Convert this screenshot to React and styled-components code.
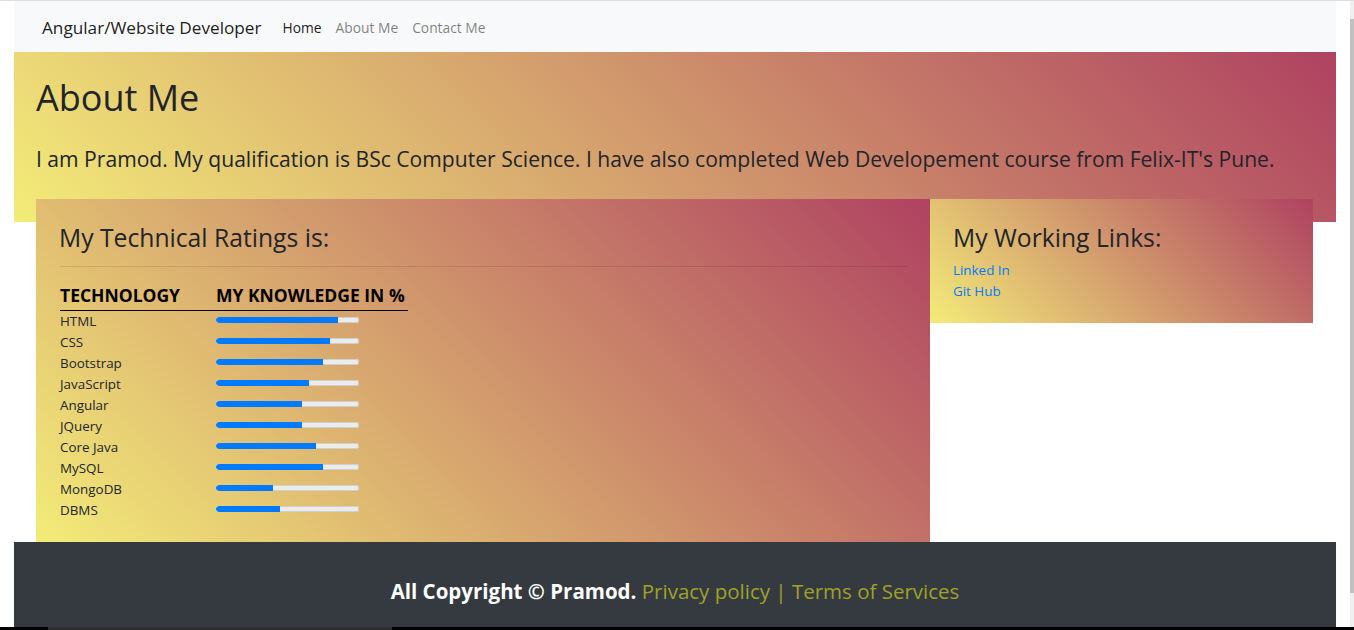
import React from "react";
import styled, { createGlobalStyle } from "styled-components";

const GlobalStyle = createGlobalStyle`
  html, body { margin: 0; padding: 0; background: #fff; }
  body { font-family: "Open Sans", "Noto Sans", sans-serif; color: #212529; }
  * { box-sizing: border-box; }
`;

const gradient = "linear-gradient(45deg, #f3ec78, #af4261)";

const Screen = styled.div`
  width: 1354px;
  height: 630px;
  display: flex;
  flex-direction: column;
  overflow: hidden;
  border-top: 1px solid #dedede;
`;

const Body = styled.div`
  flex: 1;
  display: flex;
  min-height: 0;
`;

const Page = styled.div`
  width: 1336px;
  padding-left: 14px;
  display: flex;
  flex-direction: column;
`;

const ScrollGutter = styled.div`
  width: 18px;
  display: flex;
  justify-content: flex-end;
`;

const ScrollTrack = styled.div`
  width: 4px;
  background: #f0f0f0;
  padding-top: 18px;
  padding-bottom: 34px;
  display: flex;
`;

const ScrollThumb = styled.div`
  flex: 1;
  width: 4px;
  background: #c1c1c1;
`;

const Navbar = styled.nav`
  height: 51px;
  background: #f8f9fa;
  display: flex;
  align-items: center;
  padding: 2px 28px 0;
`;

const Brand = styled.a`
  font-size: 17.2px;
  color: rgba(0, 0, 0, 0.9);
  margin-right: 14px;
  text-decoration: none;
`;

const NavLink = styled.a`
  font-size: 13.8px;
  padding: 0 7px;
  color: ${(p) => (p.$active ? "rgba(0,0,0,0.9)" : "rgba(0,0,0,0.5)")};
  text-decoration: none;
`;

const Hero = styled.section`
  background: ${gradient};
  padding: 24px 22px 47px;
`;

const HeroTitle = styled.h1`
  margin: 0 0 24px;
  font-size: 36px;
  font-weight: 500;
  line-height: 43px;
`;

const HeroText = styled.p`
  margin: 0;
  font-size: 21.1px;
  line-height: 32px;
  font-weight: 500;
`;

const CardRow = styled.div`
  display: flex;
  align-items: flex-start;
  margin: -23px 0 0 22px;
  height: 343px;
`;

const Card = styled.div`
  width: ${(p) => p.$width}px;
  height: ${(p) => p.$height};
  background: ${gradient};
  padding: 24px 22px 21px 23px;
`;

const CardTitle = styled.h3`
  margin: 0;
  font-size: 24.7px;
  line-height: 30px;
  font-weight: 500;
`;

const Rule = styled.hr`
  margin: 13px 0 16px 1px;
  border: 0;
  border-top: 1px solid rgba(0, 0, 0, 0.1);
`;

const Table = styled.div`
  display: grid;
  grid-template-columns: 156px 192px;
  width: 348px;
  margin-left: 1px;
`;

const HeadCell = styled.div`
  font-size: 17.5px;
  font-weight: 700;
  line-height: 24px;
  padding-bottom: 3px;
  border-bottom: 1px solid #000;
  color: #000;
  white-space: nowrap;
`;

const Cell = styled.div`
  font-size: 13.4px;
  line-height: 21px;
  height: 21px;
  display: flex;
  align-items: center;
`;

const Track = styled.div`
  width: 143px;
  height: 6px;
  margin-bottom: 4px;
  border-radius: 3px;
  background: #ececec;
  box-shadow: inset 0 0 0 1px #cfcfcf;
  overflow: hidden;
`;

const Fill = styled.div`
  height: 100%;
  background: #007bff;
  border-radius: 3px 0 0 3px;
`;

const LinkList = styled.div`
  margin-top: 7px;
  display: flex;
  flex-direction: column;
`;

const WorkLink = styled.a`
  font-size: 13.4px;
  line-height: 21px;
  color: #007bff;
  text-decoration: none;
`;

const Footer = styled.footer`
  height: 85px;
  background: #343a40;
  padding-top: 33px;
  text-align: center;
  font-size: 20.5px;
  line-height: 33px;
`;

const Strong = styled.span`
  color: #fff;
  font-weight: 700;
`;

const Olive = styled.span`
  color: #a0a227;
  font-weight: 500;
`;

const TaskBar = styled.div`
  height: 3px;
  background: #000;
  display: flex;
`;

const TaskSegment = styled.div`
  margin-left: 48px;
  width: 344px;
  background: #2e2e2e;
`;

const skills = [
  ["HTML", 85],
  ["CSS", 80],
  ["Bootstrap", 75],
  ["JavaScript", 65],
  ["Angular", 60],
  ["JQuery", 60],
  ["Core Java", 70],
  ["MySQL", 75],
  ["MongoDB", 40],
  ["DBMS", 45],
];

export default function App() {
  return (
    <>
      <GlobalStyle />
      <Screen>
        <Body>
          <Page>
            <Navbar>
              <Brand href="#">Angular/Website Developer</Brand>
              <NavLink href="#" $active>Home</NavLink>
              <NavLink href="#">About Me</NavLink>
              <NavLink href="#">Contact Me</NavLink>
            </Navbar>
            <Hero>
              <HeroTitle>About Me</HeroTitle>
              <HeroText>
                I am Pramod. My qualification is BSc Computer Science. I have also completed Web Developement course from Felix-IT's Pune.
              </HeroText>
            </Hero>
            <CardRow>
              <Card $width={894} $height="343px">
                <CardTitle>My Technical Ratings is:</CardTitle>
                <Rule />
                <Table>
                  <HeadCell>TECHNOLOGY</HeadCell>
                  <HeadCell>MY KNOWLEDGE IN %</HeadCell>
                  {skills.map(([name, value]) => (
                    <React.Fragment key={name}>
                      <Cell>{name}</Cell>
                      <Cell>
                        <Track>
                          <Fill style={{ width: `${value}%` }} />
                        </Track>
                      </Cell>
                    </React.Fragment>
                  ))}
                </Table>
              </Card>
              <Card $width={383} $height="124px">
                <CardTitle>My Working Links:</CardTitle>
                <LinkList>
                  <WorkLink href="#">Linked In</WorkLink>
                  <WorkLink href="#">Git Hub</WorkLink>
                </LinkList>
              </Card>
            </CardRow>
            <Footer>
              <Strong>All Copyright © Pramod. </Strong>
              <Olive>Privacy policy | Terms of Services</Olive>
            </Footer>
          </Page>
          <ScrollGutter>
            <ScrollTrack>
              <ScrollThumb />
            </ScrollTrack>
          </ScrollGutter>
        </Body>
        <TaskBar>
          <TaskSegment />
        </TaskBar>
      </Screen>
    </>
  );
}
